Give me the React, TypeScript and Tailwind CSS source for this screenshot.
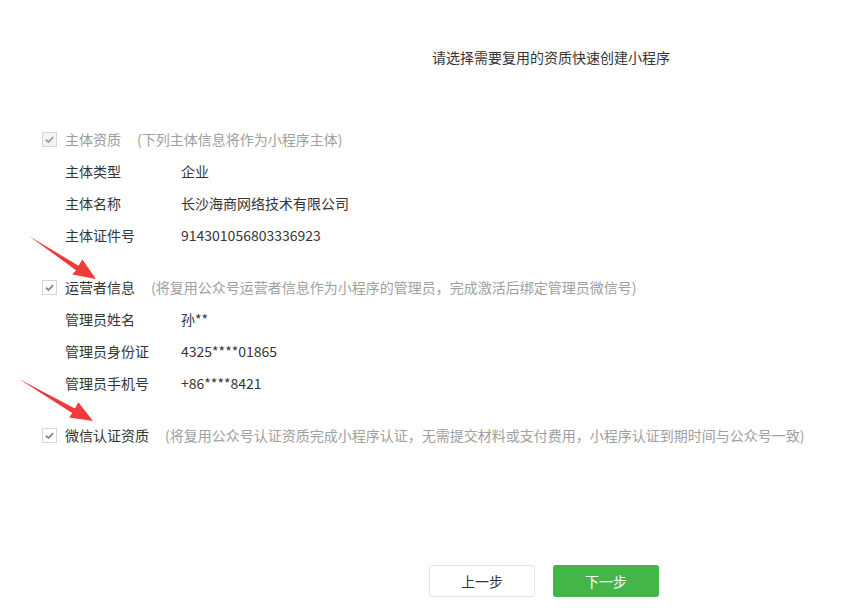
import React from "react";

const font = { fontFamily: '"Noto Sans CJK SC", "Microsoft YaHei", sans-serif' };

function Check({ disabled }: { disabled?: boolean }) {
  return (
    <span
      className={
        "flex h-[15px] w-[15px] flex-shrink-0 items-center justify-center border border-[#d6d6d6] " +
        (disabled ? "bg-[#f3f3f3]" : "bg-white")
      }
    >
      <svg viewBox="0 0 12 12" className="h-[11px] w-[11px]">
        <path d="M2 6.2 L4.8 8.8 L10 3.3" fill="none" stroke={disabled ? "#9c9c9c" : "#858585"} strokeWidth="2" />
      </svg>
    </span>
  );
}

function Header({ label, hint, disabled }: { label: string; hint: string; disabled?: boolean }) {
  return (
    <div className="flex h-8 items-center pl-[42px]">
      <Check disabled={disabled} />
      <span className={"ml-[8px] " + (disabled ? "text-[#9a9a9a]" : "text-[#353535]")}>{label}</span>
      <span className="ml-[16px] text-[#a0a0a0]">{hint}</span>
    </div>
  );
}

function Row({ label, value }: { label: string; value: string }) {
  return (
    <div className="flex h-8 items-center pl-[65px] text-[#353535]">
      <span className="w-[116px]">{label}</span>
      <span>{value}</span>
    </div>
  );
}

export default function App() {
  return (
    <div className="relative h-[615px] w-[841px] overflow-hidden bg-white text-[14px]" style={font}>
      <div className="flex h-8 items-center pl-[432px] mt-[41px] text-[#353535]">
        请选择需要复用的资质快速创建小程序
      </div>

      <div className="mt-[50px]">
        <Header label="主体资质" hint="(下列主体信息将作为小程序主体)" disabled />
        <Row label="主体类型" value="企业" />
        <Row label="主体名称" value="长沙海商网络技术有限公司" />
        <Row label="主体证件号" value="914301056803336923" />
      </div>

      <div className="mt-5">
        <Header label="运营者信息" hint="(将复用公众号运营者信息作为小程序的管理员，完成激活后绑定管理员微信号)" />
        <Row label="管理员姓名" value="孙**" />
        <Row label="管理员身份证" value="4325****01865" />
        <Row label="管理员手机号" value="+86****8421" />
      </div>

      <div className="mt-5">
        <Header label="微信认证资质" hint="(将复用公众号认证资质完成小程序认证，无需提交材料或支付费用，小程序认证到期时间与公众号一致)" />
      </div>

      <div className="mt-[114px] flex gap-[18px] pl-[429px]">
        <button className="h-8 w-[106px] rounded-[3px] border border-[#e2e2e2] bg-white text-[#353535]">上一步</button>
        <button className="h-8 w-[106px] rounded-[3px] bg-[#44b549] text-white">下一步</button>
      </div>

      <svg className="pointer-events-none absolute left-0 top-0" width="841" height="615">
        <polygon points="29,236 78.6,265.8 82.4,259.6 96,279 72.4,274.6 76.0,270.2" fill="#f03a3a" />
        <polygon points="19,379 74.9,408.6 78.4,402.2 93,421 69.2,417.5 72.2,413.1" fill="#f03a3a" />
      </svg>
    </div>
  );
}
